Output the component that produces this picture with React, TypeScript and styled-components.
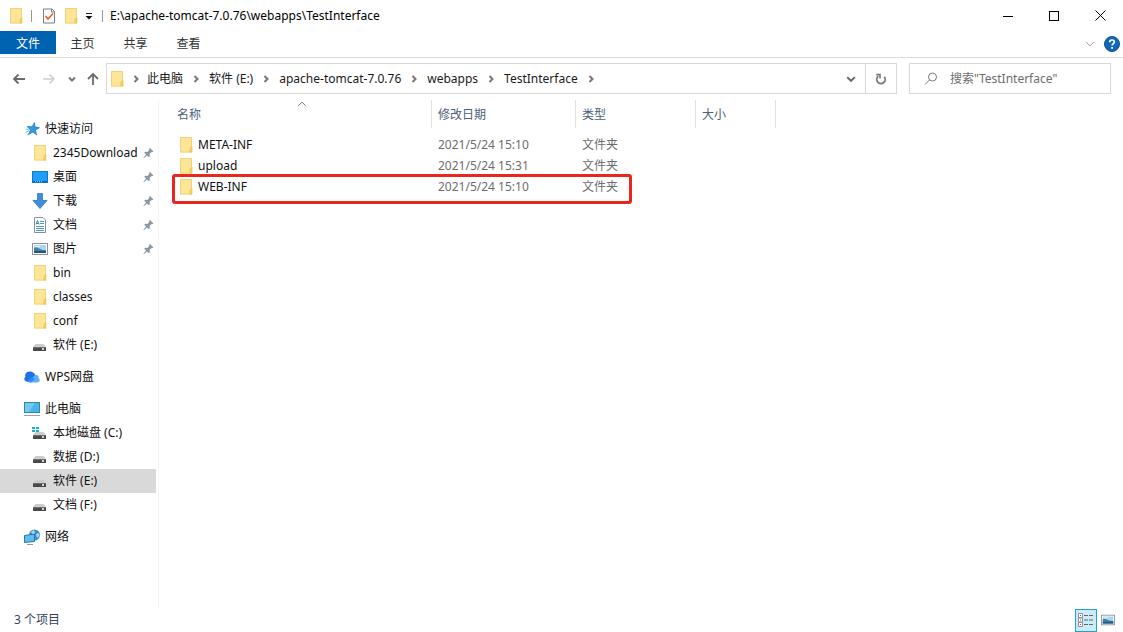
import React from 'react';
import styled, { createGlobalStyle } from 'styled-components';

const GlobalStyle = createGlobalStyle`
  *, *::before, *::after { box-sizing: border-box; }
  body {
    margin: 0;
    background: #fff;
    color: #1a1a1a;
    font: 12px/16px "Noto Sans", "Noto Sans CJK SC", sans-serif;
  }
  button, input { font: inherit; color: inherit; }
  svg { display: block; flex: none; }
`;

const Window = styled.div`
  display: flex;
  flex-direction: column;
  min-height: 100vh;
`;

const TitleBar = styled.header`
  display: flex;
  align-items: center;
  height: 31px;
  padding-left: 8px;
`;

const PlainButton = styled.button<{ $width: number }>`
  display: flex;
  align-items: center;
  justify-content: center;
  width: ${(p) => p.$width}px;
  height: 29px;
  flex: none;
  padding: 0;
  border: 0;
  background: none;
`;

const TitleDivider = styled.span`
  width: 1px;
  height: 12px;
  margin: 0 7px;
  background: #999;
`;

const Title = styled.h1`
  flex: 1;
  margin: 0;
  font-size: 12px;
  font-weight: 400;
  white-space: nowrap;
  color: #000;
`;

const Ribbon = styled.nav`
  display: flex;
  align-items: center;
  height: 27px;
  padding-bottom: 3px;
  border-bottom: 1px solid #dadbdc;
`;

const Tab = styled.button<{ $primary?: boolean }>`
  width: ${(p) => (p.$primary ? 56 : 53)}px;
  height: 23px;
  padding: 2px 0 0;
  border: 0;
  line-height: 16px;
  background: ${(p) => (p.$primary ? '#0063b1' : 'none')};
  color: ${(p) => (p.$primary ? '#fff' : '#333')};
`;

const RibbonTools = styled.div`
  display: flex;
  align-items: center;
  margin-left: auto;
  padding: 2px 1px 0 0;
`;

const AddressRow = styled.div`
  display: flex;
  align-items: center;
  padding: 5px 12px 0 4px;
`;

const AddressBar = styled.div`
  display: flex;
  flex: 1;
  align-items: center;
  height: 31px;
  margin-right: 12px;
  padding-left: 2px;
  border: 1px solid #d9d9d9;
`;

const Crumbs = styled.ol`
  display: flex;
  flex: 1;
  margin: 0;
  padding: 0;
  list-style: none;
`;

const Crumb = styled.li`
  display: flex;
  align-items: center;
`;

const CrumbLink = styled.a`
  color: #1a1a1a;
  text-decoration: none;
  white-space: nowrap;
`;

const CrumbArrow = styled.span<{ $first?: boolean }>`
  display: flex;
  justify-content: center;
  width: ${(p) => (p.$first ? 22 : 26)}px;
`;

const RefreshCell = styled.div`
  border-left: 1px solid #d9d9d9;
`;

const SearchBox = styled.label`
  display: flex;
  align-items: center;
  gap: 12px;
  width: 202px;
  height: 31px;
  padding-left: 14px;
  border: 1px solid #d9d9d9;
`;

const SearchInput = styled.input`
  flex: 1;
  min-width: 0;
  padding: 0;
  border: 0;
  outline: 0;
  background: none;
  &::placeholder { color: #6d6d6d; opacity: 1; }
`;

const Body = styled.div`
  display: flex;
  flex: 1;
`;

const Sidebar = styled.nav`
  width: 159px;
  flex: none;
  margin-top: 6px;
  padding: 17px 2px 0 0;
  border-right: 1px solid #f5f5f5;
`;

const TreeGroup = styled.ul`
  margin: 0 0 8px;
  padding: 0;
  list-style: none;
`;

const TreeLink = styled.a<{ $level: number; $selected?: boolean }>`
  display: flex;
  align-items: center;
  gap: 5px;
  height: 24px;
  padding-left: ${(p) => (p.$level === 1 ? 24 : 32)}px;
  padding-right: 2px;
  background: ${(p) => (p.$selected ? '#d9d9d9' : 'transparent')};
  color: #111;
  text-decoration: none;
  white-space: nowrap;
`;

const TreeLabel = styled.span`
  flex: 1;
  min-width: 0;
`;

const Content = styled.main`
  flex: 1;
  padding: 6px 0 0 13px;
`;

const FileTable = styled.table`
  width: 604px;
  table-layout: fixed;
  border-collapse: separate;
  border-spacing: 0;
`;

const HeadCell = styled.th<{ $width: number }>`
  position: relative;
  width: ${(p) => p.$width}px;
  height: 28px;
  padding: 2px 5px 0 6px;
  border-right: 1px solid #e2e2e2;
  color: #4c607a;
  font-weight: 400;
  text-align: left;
  &:first-child { padding-left: 5px; }
`;

const SortMark = styled.span`
  position: absolute;
  top: -1px;
  left: calc(50% - 5px);
`;

const SpacerRow = styled.tr`
  height: 6px;
  td { padding: 0; }
`;

const FileRow = styled.tr<{ $marked?: boolean }>`
  position: relative;
  height: 21px;
  ${(p) =>
    p.$marked &&
    `&::after {
      content: "";
      position: absolute;
      top: -2px;
      left: 0;
      width: 460px;
      height: 30px;
      border: 3px solid #e8281f;
      border-radius: 3px;
    }`}
`;

const Cell = styled.td`
  padding: 0 6px;
  color: #6d6d6d;
  white-space: nowrap;
`;

const FileName = styled.span`
  display: flex;
  align-items: center;
  gap: 4px;
  color: #111;
`;

const StatusBar = styled.footer`
  display: flex;
  align-items: center;
  justify-content: space-between;
  height: 24px;
  padding: 0 4px 0 14px;
  color: #34445c;
`;

const ViewModes = styled.div`
  display: flex;
  align-items: center;
`;

const ViewButton = styled.button<{ $active?: boolean }>`
  display: flex;
  align-items: center;
  justify-content: center;
  width: 22px;
  height: 23px;
  padding: 0;
  border: ${(p) => (p.$active ? '1px solid #2a9ed0' : '0')};
  background: ${(p) => (p.$active ? '#cdeaf7' : 'none')};
`;

const FolderIcon = () => (
  <svg width="16" height="16" viewBox="0 0 16 16" aria-hidden="true">
    <path d="M2 0h12v15.500H2z" fill="#ffe596" />
    <path d="M2.500.5H13.500V15H2.500z" fill="none" stroke="#f0d27a" />
    <path d="M12 15V11l2-1.500V15z" fill="#fbd768" stroke="#e6bf55" strokeWidth=".7" />
  </svg>
);

const CheckedPageIcon = () => (
  <svg width="14" height="16" viewBox="0 0 14 16" aria-hidden="true">
    <path d="M1.500 1H10L12.500 3.500V15H1.500z" fill="#fbfbfb" stroke="#76808c" />
    <path d="M9.500 1v3h3" fill="none" stroke="#76808c" />
    <path d="M3.500 8l2.500 3 5-5.500" fill="none" stroke="#e0632e" strokeWidth="1.600" />
  </svg>
);

const MenuCaret = () => (
  <svg width="8" height="8" viewBox="0 0 8 8" aria-hidden="true">
    <path d="M1 1.500h6" stroke="#222" />
    <path d="M.5 4h7L4 7.500z" fill="#111" />
  </svg>
);

const Chevron = ({ dir, size = 8, color = '#777', weight = 2 }: { dir: 'right' | 'down' | 'up'; size?: number; color?: string; weight?: number }) => {
  const d = { right: 'M2.500 1l3 3-3 3', down: 'M1 2.500l3 3 3-3', up: 'M1 5.500l3-3 3 3' }[dir];
  return (
    <svg width={size} height={size} viewBox="0 0 8 8" aria-hidden="true">
      <path d={d} fill="none" stroke={color} strokeWidth={(weight * 8) / size} />
    </svg>
  );
};

const Arrow = ({ dir, color }: { dir: 'left' | 'right' | 'up'; color: string }) => {
  const d = {
    left: 'M13 7H2M6.500 2.500L2 7l4.500 4.500',
    right: 'M1 7h11M7.500 2.500L12 7l-4.500 4.500',
    up: 'M7 13V2M2 7l5-5 5 5',
  }[dir];
  return (
    <svg width="14" height="14" viewBox="0 0 14 14" aria-hidden="true">
      <path d={d} fill="none" stroke={color} strokeWidth={dir === 'right' ? 1.5 : 1.8} />
    </svg>
  );
};

const RefreshIcon = () => (
  <svg width="12" height="12" viewBox="0 0 12 12" aria-hidden="true">
    <path d="M9.300 3.700A4.200 4.200 0 1 1 3.200 3.200" fill="none" stroke="#777" strokeWidth="1.800" />
    <path d="M1.300 1.600H5V5.400" fill="none" stroke="#777" strokeWidth="1.600" />
  </svg>
);

const SearchIcon = () => (
  <svg width="14" height="14" viewBox="0 0 14 14" aria-hidden="true">
    <circle cx="8.500" cy="5" r="4" fill="none" stroke="#7a7a7a" />
    <path d="M5.700 7.800L1 12.500" stroke="#7a7a7a" />
  </svg>
);

const HelpIcon = () => (
  <svg width="16" height="16" viewBox="0 0 16 16" aria-hidden="true">
    <circle cx="8" cy="8" r="7.500" fill="#1267b8" stroke="#0d5298" />
    <path d="M5.700 6.200C5.700 3.200 10.300 3.400 10.300 6c0 1.600-2.200 1.700-2.200 3.600" fill="none" stroke="#fff" strokeWidth="1.700" />
    <rect x="7.200" y="11" width="1.800" height="1.800" fill="#fff" />
  </svg>
);

const StarIcon = () => (
  <svg width="16" height="16" viewBox="0 0 16 16" aria-hidden="true">
    <path d="M10.500 1.500l.4 4.300 4.600 1-4 2.200 1 5-3.500-3-4.600 2.700 2-4.700L3.300 5.500l4.700.2z" fill="#3499e4" stroke="#1778c2" strokeWidth=".7" />
    <path d="M2 11.300l3-1.700M3 14.300l2-2M2.200 8.500l2.600-.4" stroke="#67b2e8" />
  </svg>
);

const DesktopIcon = () => (
  <svg width="16" height="16" viewBox="0 0 16 16" aria-hidden="true">
    <rect x=".5" y="2.500" width="15" height="11" fill="#1b9ffb" stroke="#1477c4" />
    <path d="M1 12.500h14" stroke="#0b5fa5" />
    <path d="M3 12.500h8" stroke="#7cc7fb" strokeDasharray="1 1" />
  </svg>
);

const DownloadIcon = () => (
  <svg width="16" height="16" viewBox="0 0 16 16" aria-hidden="true">
    <path d="M5.500.5h5V7.500H15L8 15.500 1 7.500h4.500z" fill="#3d8fdb" stroke="#2b76bd" strokeWidth=".8" />
  </svg>
);

const DocumentIcon = () => (
  <svg width="16" height="16" viewBox="0 0 16 16" aria-hidden="true">
    <path d="M2.500.5H11L13.500 3V15.500H2.500z" fill="#fff" stroke="#8292a0" />
    <path d="M8 4.500h4M8 6.500h4M4 9.500h8M4 11.500h8M4 13.500h8" stroke="#5294c4" />
    <path d="M4 7.500L5.500 3.500 7 7.500M4.500 6.500h2" stroke="#3c81b5" fill="none" />
  </svg>
);

const PictureIcon = ({ size = 16 }: { size?: number }) => (
  <svg width={size} height={size} viewBox="0 0 16 16" aria-hidden="true">
    <rect x=".5" y="2.500" width="15" height="11" fill="#fff" stroke="#8c9298" />
    <rect x="2" y="4" width="12" height="8" fill="#a8d6f4" />
    <path d="M2 7c3-1 4 0 6 1s4 1 6 1v3H2z" fill="#477f9c" />
    <path d="M2 10h12v2H2z" fill="#245687" />
    <path d="M3 5.500h5" stroke="#edf8ff" />
  </svg>
);

const DriveShape = () => (
  <>
    <path d="M3.500 7h8L14 10H1z" fill="#cdcdcd" />
    <rect x="1" y="10" width="13" height="4" fill="#47494b" />
    <path d="M1 10.500h13" stroke="#6c6e70" />
    <rect x="10" y="11" width="2" height="2" fill="#c4dcd0" />
  </>
);

const DriveIcon = () => (
  <svg width="16" height="16" viewBox="0 0 16 16" aria-hidden="true">
    <DriveShape />
  </svg>
);

const SystemDriveIcon = () => (
  <svg width="16" height="16" viewBox="0 0 16 16" aria-hidden="true">
    <DriveShape />
    <path d="M0 2h3v2H0zM4 2h3v2H4zM0 5h3v2H0zM4 5h3v2H4z" fill="#18afd9" />
  </svg>
);

const CloudIcon = () => (
  <svg width="16" height="16" viewBox="0 0 16 16" aria-hidden="true">
    <path d="M2.500 12.500C-.5 12 0 8.500 1.500 8 0 4.500 3.500 2 6.500 2.500 10 3 11 5.500 12 7L7 12.500z" fill="#1c70e8" />
    <path d="M5 13.500C8 13.500 8 6 12 6c2.500 0 3 2 2.600 3C17 10.500 15.500 13.500 13 13.500z" fill="#5cb0fb" />
    <path d="M2.500 12.700L7.500 8l3.500 2-4 3.500z" fill="#2f8bf5" />
  </svg>
);

const ComputerIcon = () => (
  <svg width="16" height="16" viewBox="0 0 16 16" aria-hidden="true">
    <rect x=".5" y="1.500" width="15" height="10" fill="#48b4ea" stroke="#3584ae" />
    <path d="M1 2h10L5 11H1z" fill="#72caf3" />
    <path d="M0 14.500h16" stroke="#8ea4b0" />
  </svg>
);

const NetworkIcon = () => (
  <svg width="16" height="16" viewBox="0 0 16 16" aria-hidden="true">
    <circle cx="10.500" cy="6" r="5.500" fill="#3d8ec4" />
    <path d="M7 3l3-2 1 3-2 2zM12 5l3-1 .5 3L13 9z" fill="#a9d6e8" />
    <path d="M.5 6.500l10-1.500v7.500L.5 13.500z" fill="#5bbcf0" stroke="#2977ab" />
    <path d="M3 15.500h6" stroke="#8499a6" />
  </svg>
);

const PinIcon = () => (
  <svg width="11" height="12" viewBox="0 0 11 12" aria-hidden="true">
    <path d="M6.800.8l3.600 3.700-1.200.8-.7-.2-1.900 1.900.2 2.300-1 .9L4 8.500.8 11.300.3 10.900 3 7.400 1.200 5.700l.9-1 2.300.2 1.900-2-.2-.9z" fill="#8b98a4" />
  </svg>
);

const DetailsIcon = () => (
  <svg width="18" height="16" viewBox="0 0 18 16" aria-hidden="true">
    <path d="M1.500 1.500h4v4h-4zM1.500 6h4v4h-4zM1.500 10.500h4v4h-4z" fill="#fff" stroke="#9a8f99" />
    <path d="M3 3.500h1M3 8h1M3 12.500h1" stroke="#2e6f9e" />
    <path d="M7 3.500h4M12 3.500h4M7 8h4M12 8h4M7 12.500h4M12 12.500h4" stroke="#566973" />
  </svg>
);

type TreeItem = { label: string; icon: React.ReactNode; pinned?: boolean; selected?: boolean };

const tree: TreeItem[][] = [
  [
    { label: '快速访问', icon: <StarIcon /> },
    { label: '2345Download', icon: <FolderIcon />, pinned: true },
    { label: '桌面', icon: <DesktopIcon />, pinned: true },
    { label: '下载', icon: <DownloadIcon />, pinned: true },
    { label: '文档', icon: <DocumentIcon />, pinned: true },
    { label: '图片', icon: <PictureIcon />, pinned: true },
    { label: 'bin', icon: <FolderIcon /> },
    { label: 'classes', icon: <FolderIcon /> },
    { label: 'conf', icon: <FolderIcon /> },
    { label: '软件 (E:)', icon: <DriveIcon /> },
  ],
  [{ label: 'WPS网盘', icon: <CloudIcon /> }],
  [
    { label: '此电脑', icon: <ComputerIcon /> },
    { label: '本地磁盘 (C:)', icon: <SystemDriveIcon /> },
    { label: '数据 (D:)', icon: <DriveIcon /> },
    { label: '软件 (E:)', icon: <DriveIcon />, selected: true },
    { label: '文档 (F:)', icon: <DriveIcon /> },
  ],
  [{ label: '网络', icon: <NetworkIcon /> }],
];

const crumbs = ['此电脑', '软件 (E:)', 'apache-tomcat-7.0.76', 'webapps', 'TestInterface'];

const columns = [
  { label: '名称', width: 260, sorted: true },
  { label: '修改日期', width: 144 },
  { label: '类型', width: 120 },
  { label: '大小', width: 80 },
];

const files = [
  { name: 'META-INF', date: '2021/5/24 15:10', type: '文件夹' },
  { name: 'upload', date: '2021/5/24 15:31', type: '文件夹' },
  { name: 'WEB-INF', date: '2021/5/24 15:10', type: '文件夹', marked: true },
];

export default function App() {
  return (
    <Window>
      <GlobalStyle />
      <TitleBar>
        <FolderIcon />
        <TitleDivider />
        <PlainButton $width={20} aria-label="属性"><CheckedPageIcon /></PlainButton>
        <PlainButton $width={24} aria-label="新建文件夹"><FolderIcon /></PlainButton>
        <PlainButton $width={12} aria-label="自定义快速访问工具栏"><MenuCaret /></PlainButton>
        <TitleDivider />
        <Title>E:\apache-tomcat-7.0.76\webapps\TestInterface</Title>
        <PlainButton $width={46} aria-label="最小化">
          <svg width="10" height="10"><path d="M0 5.500h10" stroke="#000" /></svg>
        </PlainButton>
        <PlainButton $width={46} aria-label="最大化">
          <svg width="10" height="10"><rect x=".5" y=".5" width="9" height="9" fill="none" stroke="#000" /></svg>
        </PlainButton>
        <PlainButton $width={46} aria-label="关闭">
          <svg width="11" height="11"><path d="M.5.5l10 10M10.500.5l-10 10" stroke="#000" /></svg>
        </PlainButton>
      </TitleBar>

      <Ribbon>
        <Tab $primary>文件</Tab>
        <Tab>主页</Tab>
        <Tab>共享</Tab>
        <Tab>查看</Tab>
        <RibbonTools>
          <PlainButton $width={24} aria-label="展开功能区"><Chevron dir="down" size={10} color="#999" weight={1} /></PlainButton>
          <PlainButton $width={20} aria-label="帮助"><HelpIcon /></PlainButton>
        </RibbonTools>
      </Ribbon>

      <AddressRow>
        <PlainButton $width={30} aria-label="后退"><Arrow dir="left" color="#6b6b6b" /></PlainButton>
        <PlainButton $width={30} aria-label="前进"><Arrow dir="right" color="#cfcfcf" /></PlainButton>
        <PlainButton $width={16} aria-label="最近的位置"><Chevron dir="down" /></PlainButton>
        <PlainButton $width={26} aria-label="上移"><Arrow dir="up" color="#6b6b6b" /></PlainButton>
        <AddressBar>
          <FolderIcon />
          <Crumbs>
            <Crumb><CrumbArrow $first><Chevron dir="right" /></CrumbArrow></Crumb>
            {crumbs.map((c) => (
              <Crumb key={c}>
                <CrumbLink href="#">{c}</CrumbLink>
                <CrumbArrow><Chevron dir="right" /></CrumbArrow>
              </Crumb>
            ))}
          </Crumbs>
          <PlainButton $width={28} aria-label="以前的位置"><Chevron dir="down" size={10} color="#666" /></PlainButton>
          <RefreshCell>
            <PlainButton $width={30} aria-label="刷新"><RefreshIcon /></PlainButton>
          </RefreshCell>
        </AddressBar>
        <SearchBox>
          <SearchIcon />
          <SearchInput type="text" aria-label="搜索" placeholder={'搜索"TestInterface"'} />
        </SearchBox>
      </AddressRow>

      <Body>
        <Sidebar>
          {tree.map((group) => (
            <TreeGroup key={group[0].label}>
              {group.map((item, i) => (
                <li key={item.label}>
                  <TreeLink href="#" $level={i === 0 ? 1 : 2} $selected={item.selected}>
                    {item.icon}
                    <TreeLabel>{item.label}</TreeLabel>
                    {item.pinned && <PinIcon />}
                  </TreeLink>
                </li>
              ))}
            </TreeGroup>
          ))}
        </Sidebar>
        <Content>
          <FileTable>
            <thead>
              <tr>
                {columns.map((c) => (
                  <HeadCell key={c.label} $width={c.width} scope="col">
                    {c.label}
                    {c.sorted && <SortMark><Chevron dir="up" size={10} weight={1} /></SortMark>}
                  </HeadCell>
                ))}
              </tr>
            </thead>
            <tbody>
              <SpacerRow aria-hidden="true"><td colSpan={4} /></SpacerRow>
              {files.map((f) => (
                <FileRow key={f.name} $marked={f.marked}>
                  <Cell><FileName><FolderIcon />{f.name}</FileName></Cell>
                  <Cell>{f.date}</Cell>
                  <Cell>{f.type}</Cell>
                  <Cell />
                </FileRow>
              ))}
            </tbody>
          </FileTable>
        </Content>
      </Body>

      <StatusBar>
        <span>3 个项目</span>
        <ViewModes>
          <ViewButton $active aria-label="详细信息"><DetailsIcon /></ViewButton>
          <ViewButton aria-label="大图标"><PictureIcon size={14} /></ViewButton>
        </ViewModes>
      </StatusBar>
    </Window>
  );
}
